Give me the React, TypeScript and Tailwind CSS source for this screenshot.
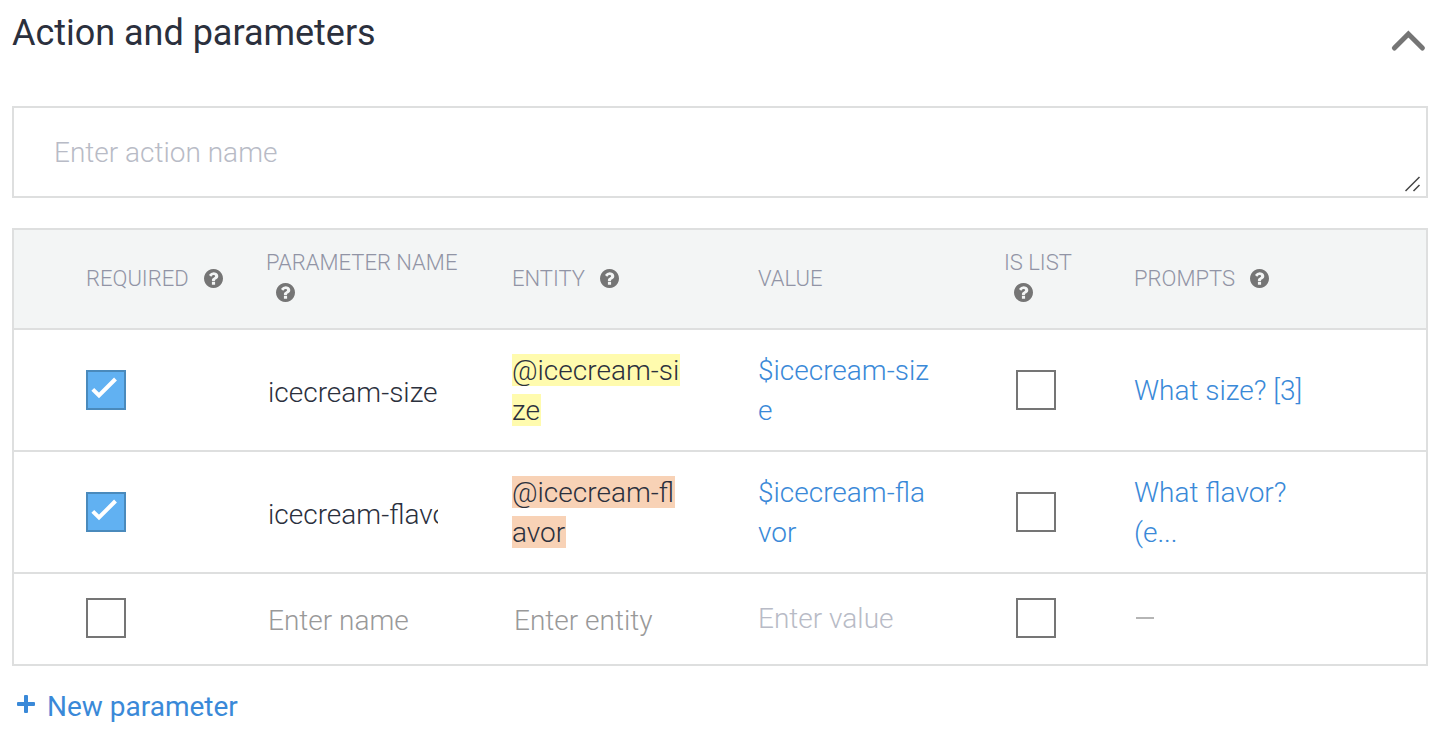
import React from "react";

function HelpIcon({ className = "" }: { className?: string }) {
  return (
    <svg viewBox="128 128 1536 1536" className={`size-[19px] shrink-0 fill-[#757575] ${className}`}>
      <path d="M1024 1376v-192q0-14-9-23t-23-9h-192q-14 0-23 9t-9 23v192q0 14 9 23t23 9h192q14 0 23-9t9-23zm256-672q0-88-55.5-163t-138.5-116-170-41q-243 0-371 213-15 24 8 42l132 100q7 6 19 6 16 0 25-12 53-68 86-92 34-24 86-24 48 0 85.5 26t37.5 59q0 38-20 61t-68 45q-63 28-115.5 86.5t-52.5 125.5v36q0 14 9 23t23 9h192q14 0 23-9t9-23q0-19 21.5-49.5t54.5-49.5q32-18 49-28.5t46-35 44.5-48 28-60.5 12.5-81zm384 192q0 209-103 385.5t-279.5 279.5-385.5 103-385.5-103-279.5-279.5-103-385.5 103-385.5 279.5-279.5 385.5-103 385.5 103 279.5 279.5 103 385.5z" />
    </svg>
  );
}

function Checkbox({ checked = false }: { checked?: boolean }) {
  return checked ? (
    <div className="size-10 border-2 border-[#4a8abc] bg-[#61b1f2]">
      <svg viewBox="0 0 36 36" className="size-9" fill="none" stroke="#fff" strokeWidth="4">
        <path d="M4.8 17.3L11 23.5L27.5 7" />
      </svg>
    </div>
  ) : (
    <div className="size-10 border-2 border-[#757575]" />
  );
}

const GRID = "grid grid-cols-[180px_246px_246px_246px_130px_292px] items-center pl-[72px]";

function Header({ label, help = true }: { label: string; help?: boolean }) {
  return (
    <div className="flex items-center">
      <span>{label}</span>
      {help && <HelpIcon className="mb-0.5 ml-[15px]" />}
    </div>
  );
}

function StackedHeader({ label }: { label: string }) {
  return (
    <div className="flex flex-col pb-2.5">
      <span className="leading-8">{label}</span>
      <HelpIcon className="ml-[10px] mt-1" />
    </div>
  );
}

type Row = { name: string; entity: string; value: string; prompt: string; mark: string };

const rows: Row[] = [
  {
    name: "icecream-size",
    entity: "@icecream-size",
    value: "$icecream-size",
    prompt: "What size? [3]",
    mark: "bg-[linear-gradient(#fffbae,#fffbae)]",
  },
  {
    name: "icecream-flavor",
    entity: "@icecream-flavor",
    value: "$icecream-flavor",
    prompt: "What flavor? (e...",
    mark: "bg-[linear-gradient(#f8d2b6,#f8d2b6)]",
  },
];

export default function App() {
  return (
    <main className="h-[756px] w-[1440px] overflow-hidden bg-white px-3 font-['Roboto',sans-serif] font-light text-[#2b303d]">
      <header className="flex h-[106px] items-start justify-between">
        <h1 className="mt-3 text-[36px] font-normal leading-[42px] tracking-[-0.02px]">Action and parameters</h1>
        <svg
          viewBox="0 0 36 22"
          className="mr-0.5 mt-[30px] h-[22px] w-9"
          fill="none"
          stroke="#757575"
          strokeWidth="5"
          strokeLinecap="round"
        >
          <path d="M4.4 18L18.4 4L32.4 18" />
        </svg>
      </header>

      <div className="flex h-[92px] items-center justify-between border-2 border-[#dedfdf] pl-10 text-[28px] text-[#b8bbc6]">
        <span className="pt-0.5">Enter action name</span>
        <svg viewBox="0 0 16 16" className="mb-1 mr-[5px] size-4 self-end" fill="none" stroke="#444" strokeWidth="1.5">
          <path d="M0.5 15L14.5 1M8.5 15L14.5 9" />
        </svg>
      </div>

      <section className="mt-[30px] border-2 border-[#dedfdf] text-[28px] leading-10">
        <div className={`${GRID} h-[98px] bg-[#f3f5f5] text-[22px] text-[#9194a5]`}>
          <Header label="REQUIRED" />
          <StackedHeader label="PARAMETER NAME" />
          <Header label="ENTITY" />
          <Header label="VALUE" help={false} />
          <StackedHeader label="IS LIST" />
          <Header label="PROMPTS" />
        </div>
        {rows.map((row) => (
          <div key={row.name} className={`${GRID} h-[122px] border-t-2 border-[#dedfdf]`}>
            <Checkbox checked />
            <div className="ml-0.5 w-[170px] overflow-hidden whitespace-nowrap pt-1.5">{row.name}</div>
            <div className="w-[172px] break-all pt-0.5">
              <span className={`box-decoration-clone bg-[length:100%_32px] bg-no-repeat pr-px ${row.mark}`}>
                {row.entity}
              </span>
            </div>
            <div className="w-[172px] break-all pt-0.5 text-[#3a89d8]">{row.value}</div>
            <div className="pl-3"><Checkbox /></div>
            <div className="w-[172px] pt-0.5 text-[#3a89d8]">{row.prompt}</div>
          </div>
        ))}
        <div className={`${GRID} h-[92px] border-t-2 border-[#dedfdf] pb-0.5`}>
          <Checkbox />
          <div className="ml-0.5 pt-1.5 text-[#999]">Enter name</div>
          <div className="ml-0.5 pt-1.5 text-[#999]">Enter entity</div>
          <div className="pt-0.5 text-[#b8bbc6]">Enter value</div>
          <div className="pl-3"><Checkbox /></div>
          <div className="flex h-10 items-center pl-0.5">
            <div className="h-0.5 w-[18px] bg-[#b5b5b5]" />
          </div>
        </div>
      </section>

      <button className="mt-[21px] flex items-center pl-[5px] text-[28px] font-normal leading-10 text-[#3a89d8]">
        <svg viewBox="0 0 18 18" className="mb-1.5 mr-3 size-[18px]" fill="currentColor">
          <path d="M8 0h2q1 0 1 1v6h6q1 0 1 1v2q0 1-1 1h-6v6q0 1-1 1h-2q-1 0-1-1v-6h-6q-1 0-1-1v-2q0-1 1-1h6v-6q0-1 1-1z" />
        </svg>
        New parameter
      </button>
    </main>
  );
}
